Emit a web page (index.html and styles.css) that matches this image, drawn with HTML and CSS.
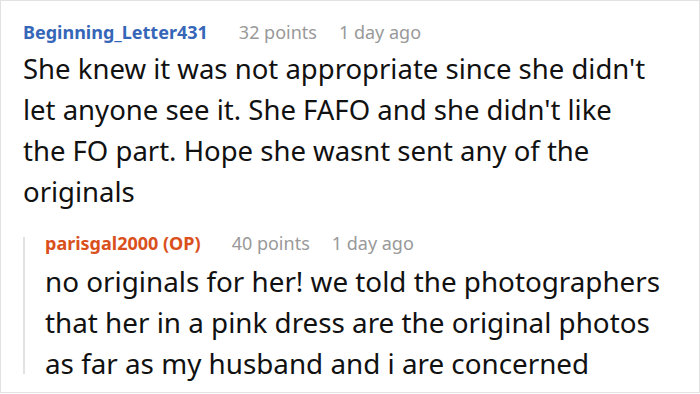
FILE: index.html
```html
<!DOCTYPE html>
<html>
<head>
<meta charset="utf-8">
<link rel="stylesheet" href="styles.css">
</head>
<body>
<div class="card">
  <div class="comment">
    <div class="meta">
      <span class="author">Beginning_Letter431</span>
      <span class="info">32 points</span>
      <span class="info">1 day ago</span>
    </div>
    <p class="text">She knew it was not appropriate since she didn't<br>let anyone see it. She FAFO and she didn't like<br>the FO part. Hope she wasnt sent any of the<br>originals</p>
    <div class="reply">
      <div class="meta">
        <span class="author op">parisgal2000 (OP)</span>
        <span class="info">40 points</span>
        <span class="info">1 day ago</span>
      </div>
      <p class="text">no originals for her! we told the photographers<br>that her in a pink dress are the original photos<br>as far as my husband and i are concerned</p>
    </div>
  </div>
</div>
</body>
</html>
```

FILE: styles.css
```css
html, body {
  margin: 0;
  padding: 0;
  background: #fff;
}
body {
  font-family: "Noto Sans", "Open Sans", sans-serif;
  width: 700px;
  height: 394px;
  overflow: hidden;
}
.card {
  box-sizing: border-box;
  width: 700px;
  height: 393px;
  border: 1px solid #e2e2e2;
  padding: 17px 10px 0 22px;
  overflow: hidden;
}
.meta {
  display: flex;
  gap: 22px;
  font-size: 18px;
  line-height: 28px;
  height: 28px;
}
.author {
  color: #3566b8;
  font-weight: 700;
  margin-right: 9px;
}
.author.op {
  color: #d9501c;
}
.info {
  color: #999;
}
.text {
  margin: 2px 0 0 0;
  font-size: 27.5px;
  line-height: 41px;
  color: #111;
  white-space: nowrap;
}
.reply {
  height: 137px;
  margin-top: 25px;
  border-left: 2px solid #e2e2e2;
  padding-left: 20px;
}
.reply .meta {
  line-height: 12px;
  height: 12px;
}
.reply .text {
  font-size: 27.8px;
  margin-top: 12px;
}
```
